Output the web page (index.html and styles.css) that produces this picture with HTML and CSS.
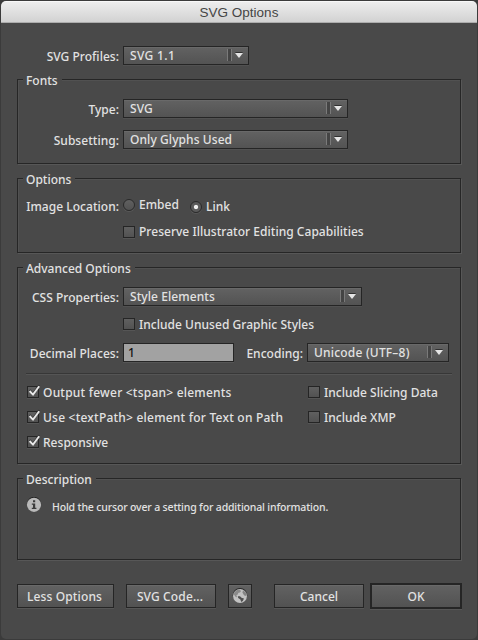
FILE: index.html
```html
<!DOCTYPE html>
<html lang="en">
<head>
<meta charset="utf-8">
<title>SVG Options</title>
<link rel="stylesheet" href="styles.css">
</head>
<body>
<main class="window">
  <header class="titlebar">SVG Options</header>
  <form class="content">
    <div class="row row-profiles">
      <span class="label">SVG Profiles:</span>
      <div class="select select-profile"><span>SVG 1.1</span></div>
    </div>

    <section class="group group-fonts">
      <h2><span>Fonts</span></h2>
      <div class="row">
        <span class="label">Type:</span>
        <div class="select select-font"><span>SVG</span></div>
      </div>
      <div class="row row-subsetting">
        <span class="label">Subsetting:</span>
        <div class="select select-font"><span>Only Glyphs Used</span></div>
      </div>
    </section>

    <section class="group group-options">
      <h2><span>Options</span></h2>
      <div class="row row-radios">
        <span class="label">Image Location:</span>
        <div class="choice choice-embed"><i class="radio"></i><span>Embed</span></div>
        <div class="choice choice-link"><i class="radio on"></i><span>Link</span></div>
      </div>
      <div class="choice indented"><i class="check"></i><span>Preserve Illustrator Editing Capabilities</span></div>
    </section>

    <section class="group group-advanced">
      <h2><span>Advanced Options</span></h2>
      <div class="row">
        <span class="label">CSS Properties:</span>
        <div class="select select-css"><span>Style Elements</span></div>
      </div>
      <div class="choice indented"><i class="check"></i><span>Include Unused Graphic Styles</span></div>
      <div class="row row-decimal">
        <span class="label">Decimal Places:</span>
        <div class="input">1</div>
        <span class="label label-encoding">Encoding:</span>
        <div class="select select-encoding"><span>Unicode (UTF–8)</span></div>
      </div>
      <div class="divider"></div>
      <div class="checks">
        <div class="choice wide"><i class="check"><svg viewBox="0 0 14 13"><path d="M2.6 6 6 9.6 12.2 1.2"/></svg></i><span>Output fewer &lt;tspan&gt; elements</span></div>
        <div class="choice"><i class="check"></i><span>Include Slicing Data</span></div>
        <div class="choice wide"><i class="check"><svg viewBox="0 0 14 13"><path d="M2.6 6 6 9.6 12.2 1.2"/></svg></i><span>Use &lt;textPath&gt; element for Text on Path</span></div>
        <div class="choice"><i class="check"></i><span>Include XMP</span></div>
        <div class="choice"><i class="check"><svg viewBox="0 0 14 13"><path d="M2.6 6 6 9.6 12.2 1.2"/></svg></i><span>Responsive</span></div>
      </div>
    </section>

    <section class="group group-description">
      <h2><span>Description</span></h2>
      <div class="info">
        <svg class="info-icon" viewBox="0 0 16 16"><circle cx="8" cy="7" r="7.2" fill="#222"/><circle cx="8" cy="7.8" r="7.1" fill="#b9b9b9"/><path d="M7 3.2h2.2v2H7zM5.8 6.5h3.4v4.3h1.2V12H5.8v-1.2H7V7.7H5.8z" fill="#3b3b3b"/></svg>
        <span>Hold the cursor over a setting for additional information.</span>
      </div>
    </section>

    <footer class="buttons">
      <div class="button button-less">Less Options</div>
      <div class="button button-code">SVG Code...</div>
      <div class="button button-globe">
        <svg viewBox="0 0 16 16"><circle cx="8" cy="7.2" r="7.2" fill="#262626"/><circle cx="8" cy="8" r="7" fill="#c2c2c2"/><path d="M2.2 4.4 4.5 2.2 7.5 1.5 9 3 8 4.5 6.5 4.8 5.3 7 4.3 7.3 5 9 4 9.2 2 6.8z" fill="#8a8a8a"/><path d="M11 2.2 13.5 4.2 14.7 7.3 13 8 11.5 6.5 10.5 4.5z" fill="#858585"/><path d="M5.8 8.2 8 8.3 9.5 9.7 12 10.5 10.8 13 9.2 14 8.4 11.5 6.2 10z" fill="#505050"/></svg>
      </div>
      <div class="button button-cancel">Cancel</div>
      <div class="button button-ok">OK</div>
    </footer>
  </form>
</main>
</body>
</html>
```

FILE: styles.css
```css
* { box-sizing: border-box; }
body {
  margin: 0;
  height: 640px;
  overflow: hidden;
  background: #3b3b3b;
  color: #e2e2e2;
  font: 500 12px/16px "Noto Sans", "Open Sans", sans-serif;
  white-space: nowrap;
}
.window {
  margin: 1px 1px 0;
  height: 638px;
  border-radius: 5px;
  background: #494949;
  overflow: hidden;
}
.titlebar {
  height: 22px;
  background: linear-gradient(#ededed, #d2d2d2);
  border-top: 1px solid #f8f8f8;
  border-bottom: 1px solid #adadad;
  color: #454545;
  font: 13.5px/22px "Liberation Sans", sans-serif;
  text-align: center;
}
.content { padding: 23px 15px 0 16px; }
.row { display: flex; align-items: center; height: 19px; }
.label {
  width: 101px;
  margin-right: 4px;
  padding-top: 2px;
  text-align: right;
  letter-spacing: 0.03px;
}
.row-profiles { padding-left: 1px; margin-bottom: 14px; }
.select {
  display: flex;
  align-items: center;
  position: relative;
  height: 19px;
  padding: 1px 0 0 6px;
  border: 1px solid #252525;
  background: linear-gradient(#626262, #535353);
  box-shadow: 0 1px #515151, inset 0 1px #696969;
  letter-spacing: 0.08px;
}
.select::before {
  content: "";
  position: absolute;
  right: 16px;
  top: 2px;
  width: 3px;
  height: 12px;
  border-left: 1px solid #7a7a7a;
  border-right: 1px solid #7a7a7a;
  background: #444;
}
.select::after {
  content: "";
  position: absolute;
  right: 5px;
  top: 6px;
  border: solid transparent;
  border-width: 6px 3.5px 0;
  border-width: 5px 4px 0;
  border-top-color: #e5e5e5;
  filter: drop-shadow(0 -1px #303030);
}
.select-profile { width: 126px; letter-spacing: 0.35px; }
.select-font { width: 225px; }
.select-css { width: 239px; }
.select-encoding { width: 142px; letter-spacing: 0.2px; }
.group {
  width: 444px;
  margin-bottom: 14px;
  border: 1px solid #262626;
  box-shadow: 1px 1px #575757, inset 1px 1px #515151;
}
.group h2 {
  height: 16px;
  margin: -8px 0 0 5px;
  font: inherit;
}
.group h2 span {
  display: inline-block;
  height: 16px;
  padding: 1px 4px 0 3px;
  background: #494949;
}
.group-fonts { height: 85px; }
.group-fonts .row { margin-top: 11px; }
.group-fonts .row-subsetting { margin-top: 12px; }
.group-options { height: 75px; }
.row-radios { margin-top: 10px; align-items: flex-start; }
.choice { display: flex; align-items: center; height: 12px; gap: 4px; letter-spacing: 0.03px; }
.choice span { padding-top: 1px; }
.row-radios .choice span { padding: 0; }
.wide { letter-spacing: 0.22px; }
.choice-embed { margin-top: 2px; width: 67px; }
.choice-link { margin-top: 4px; }
.indented { margin: 10px 0 0 105px; }
.group-options .indented span { padding-top: 0; }
.radio {
  width: 12px;
  height: 12px;
  border: 1px solid #2a2a2a;
  border-radius: 50%;
  background: linear-gradient(#606060, #525252);
  box-shadow: 0 1px #595959;
}
.radio.on { background: radial-gradient(circle, #efefef 0 1.7px, #5a5a5a 2.6px); }
.check {
  width: 12px;
  height: 12px;
  border: 1px solid #252525;
  background: linear-gradient(#606060, #525252);
  box-shadow: 0 1px #555;
}
.check svg {
  display: block;
  width: 14px;
  height: 13px;
  margin: -2px 0 0 -1px;
  fill: none;
  stroke: #e9e9e9;
  stroke-width: 1.9;
  filter: drop-shadow(0 -1px #303030);
}
.group-advanced { height: 197px; }
.group-advanced > .row { margin-top: 11px; }
.group-advanced > .indented { margin-top: 12px; }
.group-advanced > .row-decimal { margin-top: 13px; }
.input {
  width: 111px;
  height: 19px;
  padding: 1px 0 0 4px;
  border: 1px solid #252525;
  background: #a2a2a2;
  box-shadow: 0 1px #555;
  color: #111;
}
.label-encoding { width: 69px; }
.divider {
  width: 426px;
  height: 2px;
  margin: 11px 0 0 8px;
  background: #373737;
  border-bottom: 1px solid #555;
}
.checks {
  display: grid;
  grid-template-columns: 281px auto;
  justify-content: start;
  row-gap: 13px;
  margin: 11px 0 0 9px;
}
.group-description { height: 82px; margin-bottom: 23px; }
.info {
  display: flex;
  align-items: center;
  gap: 10px;
  height: 16px;
  margin: 10px 0 0 8px;
  font-size: 10.5px;
  letter-spacing: -0.16px;
}
.info span { padding-top: 3px; }
.info-icon { width: 16px; height: 16px; }
.buttons { display: flex; align-items: center; height: 26px; }
.button {
  display: flex;
  align-items: center;
  justify-content: center;
  height: 24px;
  padding-top: 1px;
  border: 1px solid #252525;
  background: linear-gradient(#626262, #525252);
  box-shadow: 0 1px #565656, inset 0 1px #696969;
}
.button-less { width: 97px; margin-right: 12px; }
.button-code { width: 90px; margin-right: 12px; }
.button-less, .button-code { padding-right: 2px; letter-spacing: 0.13px; }
.button-globe { width: 24px; margin-right: 22px; padding: 0; }
.button-globe svg { width: 16px; height: 16px; flex: none; }
.button-cancel { width: 90px; margin-right: 6px; }
.button-ok { width: 92px; height: 26px; border-width: 2px; }
```
